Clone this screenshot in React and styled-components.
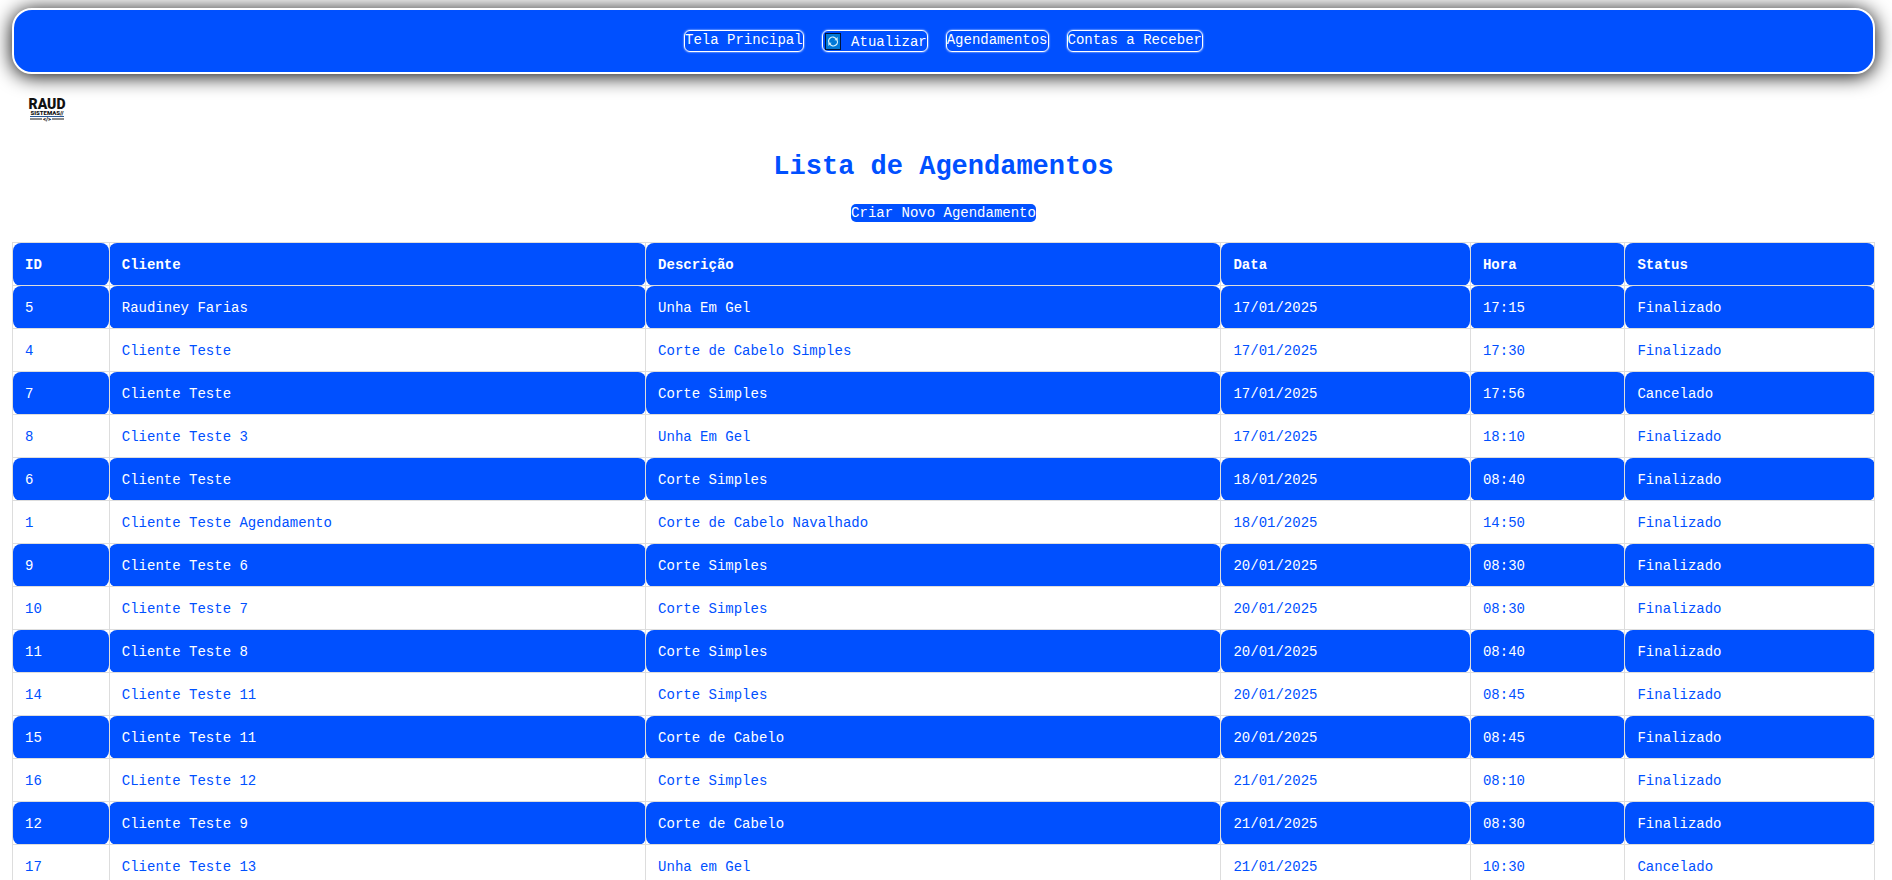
import React from "react";
import styled, { createGlobalStyle } from "styled-components";

const BLUE = "#0050ff";

const GlobalStyle = createGlobalStyle`
  * { box-sizing: border-box; }
  html { scrollbar-width: none; }
  body {
    margin: 0;
    background: #fff;
    color: ${BLUE};
    font: 14px/18px Consolas, "Liberation Mono", monospace;
  }
`;

const Page = styled.div`
  padding: 8px 17px 8px 12px;
`;

const TopBar = styled.header`
  height: 66px;
  padding-top: 20px;
  background: ${BLUE};
  border: 2px solid #fff;
  border-radius: 20px;
  box-shadow: 0 2px 20px #000;
`;

const Nav = styled.nav`
  display: flex;
  justify-content: center;
  gap: 18px;
`;

const NavLink = styled.a`
  display: flex;
  height: 22px;
  padding-top: ${(p) => (p.$withIcon ? "2px" : "0")};
  border: 1px solid #fff;
  border-radius: 6px;
  box-shadow: 0 0 2px #fff;
  color: #fff;
  line-height: 19px;
  text-decoration: none;
  white-space: pre;

  svg {
    width: 16px;
    height: 17px;
    margin: 0 2px;
  }
`;

const LogoLink = styled.a`
  display: block;
  width: 34px;
  margin: 24px 0 0 18px;

  svg {
    display: block;
    width: 34px;
    height: 24px;
    overflow: visible;
  }
`;

const Main = styled.main`
  display: flex;
  flex-direction: column;
  align-items: center;
`;

const Title = styled.h1`
  margin: 27px 0 19px;
  font-size: 27px;
  line-height: 36px;
  font-weight: 700;
`;

const CreateButton = styled.button`
  height: 18px;
  margin-bottom: 20px;
  padding: 0;
  border: 0;
  border-radius: 5px;
  background: ${BLUE};
  color: #fff;
  font: inherit;
`;

const Table = styled.table`
  width: 100%;
  table-layout: fixed;
  border-collapse: collapse;
`;

const Col = styled.col`
  width: ${(p) => p.$width};
`;

const HeadCell = styled.th`
  padding: 13px 12px 11px;
  border: 1px solid #ddd;
  border-radius: 8px;
  background: ${BLUE};
  color: #fff;
  text-align: left;
`;

const Cell = styled.td`
  padding: 13px 12px 11px;
  border: 1px solid #ddd;
  border-radius: 8px;
`;

const Row = styled.tr`
  &:nth-child(odd) ${Cell} {
    background: ${BLUE};
    color: #fff;
  }
`;

const RefreshIcon = () => (
  <svg viewBox="0 0 16 17" aria-hidden="true">
    <rect x="0.5" y="0.5" width="15" height="16" fill="#0078d7" stroke="#00143c" />
    <g fill="none" stroke="#d8f3ff" strokeWidth="1.2">
      <path d="M4.200 10.200A4 4 0 0 1 11 5.900" />
      <path d="M11.800 6.800A4 4 0 0 1 5 11.100" />
    </g>
    <path d="M12.600 4v3.200H9.400zM3.400 13V9.800h3.200z" fill="#d8f3ff" />
  </svg>
);

const Logo = () => (
  <svg viewBox="0 0 34 24" role="img" aria-label="Raud Sistemas">
    <g fill="#111" fontFamily="Roboto, 'Liberation Sans', sans-serif" textAnchor="middle">
      <text x="17" y="11" fontSize="14" fontWeight="900">RAUD</text>
      <text x="17" y="17" fontSize="6" fontWeight="900">SISTEMAS//</text>
      <text x="17" y="23" fontSize="6" fontWeight="900">&lt;/&gt;</text>
    </g>
    <path d="M0 18.500h34" stroke="#2a5a96" />
    <path d="M0 21h12M22 21h12" stroke="#666" strokeWidth="1.500" />
  </svg>
);

const columns = [
  ["ID", "5.2%"],
  ["Cliente", "28.8%"],
  ["Descrição", "30.9%"],
  ["Data", "13.4%"],
  ["Hora", "8.3%"],
  ["Status", "13.4%"],
];

const appointments = [
  ["5", "Raudiney Farias", "Unha Em Gel", "17/01/2025", "17:15", "Finalizado"],
  ["4", "Cliente Teste", "Corte de Cabelo Simples", "17/01/2025", "17:30", "Finalizado"],
  ["7", "Cliente Teste", "Corte Simples", "17/01/2025", "17:56", "Cancelado"],
  ["8", "Cliente Teste 3", "Unha Em Gel", "17/01/2025", "18:10", "Finalizado"],
  ["6", "Cliente Teste", "Corte Simples", "18/01/2025", "08:40", "Finalizado"],
  ["1", "Cliente Teste Agendamento", "Corte de Cabelo Navalhado", "18/01/2025", "14:50", "Finalizado"],
  ["9", "Cliente Teste 6", "Corte Simples", "20/01/2025", "08:30", "Finalizado"],
  ["10", "Cliente Teste 7", "Corte Simples", "20/01/2025", "08:30", "Finalizado"],
  ["11", "Cliente Teste 8", "Corte Simples", "20/01/2025", "08:40", "Finalizado"],
  ["14", "Cliente Teste 11", "Corte Simples", "20/01/2025", "08:45", "Finalizado"],
  ["15", "Cliente Teste 11", "Corte de Cabelo", "20/01/2025", "08:45", "Finalizado"],
  ["16", "CLiente Teste 12", "Corte Simples", "21/01/2025", "08:10", "Finalizado"],
  ["12", "Cliente Teste 9", "Corte de Cabelo", "21/01/2025", "08:30", "Finalizado"],
  ["17", "Cliente Teste 13", "Unha em Gel", "21/01/2025", "10:30", "Cancelado"],
];

export default function App() {
  return (
    <Page>
      <GlobalStyle />
      <TopBar>
        <Nav>
          <NavLink href="#">Tela Principal</NavLink>
          <NavLink href="#" $withIcon><RefreshIcon /> Atualizar</NavLink>
          <NavLink href="#">Agendamentos</NavLink>
          <NavLink href="#">Contas a Receber</NavLink>
        </Nav>
      </TopBar>
      <LogoLink href="#"><Logo /></LogoLink>
      <Main>
        <Title>Lista de Agendamentos</Title>
        <CreateButton type="button">Criar Novo Agendamento</CreateButton>
        <Table>
          <colgroup>
            {columns.map(([name, width]) => <Col key={name} $width={width} />)}
          </colgroup>
          <thead>
            <tr>{columns.map(([name]) => <HeadCell key={name} scope="col">{name}</HeadCell>)}</tr>
          </thead>
          <tbody>
            {appointments.map((row) => (
              <Row key={row[0]}>
                {row.map((value, i) => <Cell key={columns[i][0]}>{value}</Cell>)}
              </Row>
            ))}
          </tbody>
        </Table>
      </Main>
    </Page>
  );
}
